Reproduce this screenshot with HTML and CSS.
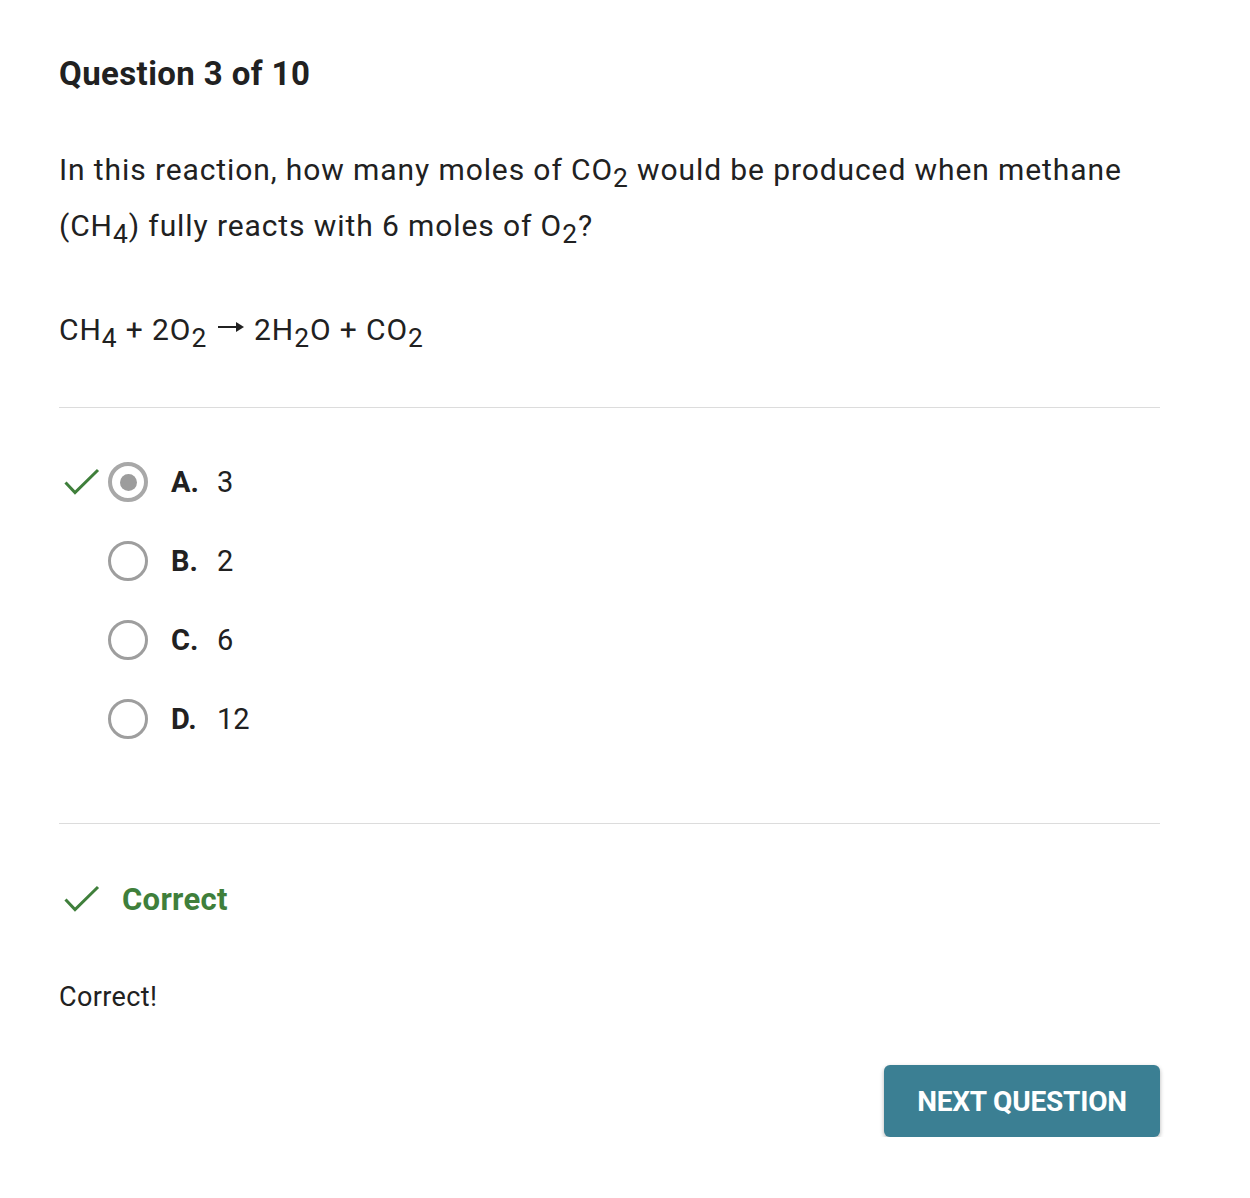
FILE: index.html
```html
<!DOCTYPE html>
<html>
<head>
<meta charset="utf-8">
<link rel="stylesheet" href="styles.css">
</head>
<body>
<main class="quiz">
  <h1 class="title">Question 3 of 10</h1>
  <p class="prompt">In this reaction, how many moles of CO<sub>2</sub> would be produced when methane (CH<sub>4</sub>) fully reacts with 6 moles of O<sub>2</sub>?</p>
  <p class="equation">CH<sub>4</sub> + 2O<sub>2</sub><span class="arrow" aria-label="yields"></span>2H<sub>2</sub>O + CO<sub>2</sub></p>
  <hr class="divider">
  <ul class="options">
    <li class="option">
      <span class="mark"><svg width="36" height="28" viewBox="0 0 36 28"><path d="M1.5 14.5 L11 24.5 L34 2" fill="none" stroke="#3f7f3b" stroke-width="3"/></svg></span>
      <span class="radio selected"></span>
      <span class="letter">A.</span><span class="value">3</span>
    </li>
    <li class="option">
      <span class="mark"></span>
      <span class="radio"></span>
      <span class="letter">B.</span><span class="value">2</span>
    </li>
    <li class="option">
      <span class="mark"></span>
      <span class="radio"></span>
      <span class="letter">C.</span><span class="value">6</span>
    </li>
    <li class="option">
      <span class="mark"></span>
      <span class="radio"></span>
      <span class="letter">D.</span><span class="value">12</span>
    </li>
  </ul>
  <hr class="divider">
  <div class="result">
    <svg width="36" height="28" viewBox="0 0 36 28"><path d="M1.5 14.5 L11 24.5 L34 2" fill="none" stroke="#3f7f3b" stroke-width="3"/></svg>
    <span class="result-label">Correct</span>
  </div>
  <p class="feedback">Correct!</p>
  <div class="actions">
    <button class="next">NEXT QUESTION</button>
  </div>
</main>
</body>
</html>
```
FILE: styles.css
```css
html, body {
  margin: 0;
  padding: 0;
  background: #fff;
}
body {
  font-family: Roboto, "Liberation Sans", sans-serif;
  color: #212121;
}
.quiz {
  width: 1101px;
  margin-left: 59px;
  padding-top: 52px;
}
.title {
  margin: 0;
  font-size: 33px;
  font-weight: 700;
  line-height: 44px;
  letter-spacing: 0.4px;
}
.prompt {
  margin: 46px 0 0;
  font-size: 30px;
  line-height: 56px;
  letter-spacing: 0.9px;
}
sub {
  font-size: 0.88em;
  vertical-align: -0.25em;
  line-height: 0;
}
.equation {
  margin: 56px 0 0;
  font-size: 30px;
  line-height: 40px;
  letter-spacing: 0.9px;
}
.arrow {
  display: inline-block;
  width: 26px;
  height: 10px;
  margin: 0 10px 0 11px;
  vertical-align: 0.28em;
  position: relative;
}
.arrow::before {
  content: "";
  position: absolute;
  left: 0;
  top: 4px;
  width: 21px;
  height: 2px;
  background: #212121;
}
.arrow::after {
  content: "";
  position: absolute;
  left: 18px;
  top: 0;
  border-left: 8px solid #212121;
  border-top: 5px solid transparent;
  border-bottom: 5px solid transparent;
}
.divider {
  margin: 0;
  border: 0;
  border-top: 1px solid #dcdcdc;
}
.equation + .divider {
  margin-top: 57px;
}
.options {
  list-style: none;
  margin: 0;
  padding: 54px 0 84px;
  display: flex;
  flex-direction: column;
  gap: 39px;
}
.option {
  display: flex;
  align-items: center;
  height: 40px;
  font-size: 29px;
}
.mark {
  width: 49px;
  display: flex;
  align-items: center;
  padding-left: 5px;
  box-sizing: border-box;
}
.radio {
  width: 40px;
  height: 40px;
  box-sizing: border-box;
  border: 3px solid #9e9e9e;
  border-radius: 50%;
  display: flex;
  align-items: center;
  justify-content: center;
}
.radio.selected {
  border: 4px solid #a8a8a8;
}
.radio.selected::after {
  content: "";
  width: 17px;
  height: 17px;
  border-radius: 50%;
  background: #9c9c9c;
}
.letter {
  margin-left: 23px;
  font-weight: 700;
  width: 46px;
}
.value {
  font-weight: 400;
}
.result {
  display: flex;
  align-items: center;
  gap: 22px;
  margin-top: 55px;
  padding-left: 5px;
  height: 40px;
}
.result-label {
  color: #3f7f3b;
  font-weight: 700;
  font-size: 31px;
  letter-spacing: 0.3px;
}
.feedback {
  margin: 60px 0 0;
  font-size: 27px;
  line-height: 36px;
  letter-spacing: 0.4px;
}
.actions {
  display: flex;
  justify-content: flex-end;
  margin-top: 50px;
}
.next {
  width: 276px;
  height: 72px;
  border: 0;
  border-radius: 6px;
  background: #3b7f93;
  color: #fff;
  font-family: Roboto, "Liberation Sans", sans-serif;
  font-weight: 700;
  font-size: 28px;
  letter-spacing: -0.2px;
  box-shadow: 0 2px 4px rgba(0,0,0,0.3);
  padding: 0;
}
```
